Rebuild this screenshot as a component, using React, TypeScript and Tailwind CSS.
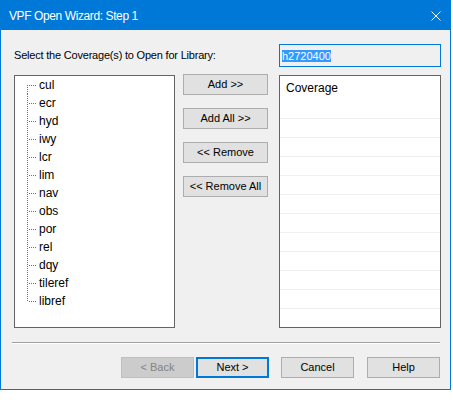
import React from "react";

const items = ["cul", "ecr", "hyd", "iwy", "lcr", "lim", "nav", "obs", "por", "rel", "dqy", "tileref", "libref"];

function TreeRow({ label, first, last }: { label: string; first: boolean; last: boolean }) {
  return (
    <div className="flex items-center h-[18px] pl-[12px]">
      <svg width="12" height="18" className="shrink-0" shapeRendering="crispEdges">
        <line
          x1="0.5"
          y1={first ? 9 : 0}
          x2="0.5"
          y2={last ? 10 : 18}
          stroke="#707070"
          strokeWidth="1"
          strokeDasharray="1 1"
        />
        <line x1="2" y1="9.5" x2="10" y2="9.5" stroke="#707070" strokeWidth="1" strokeDasharray="1 1" />
      </svg>
      <span className="text-[12px] leading-[16px] text-black">{label}</span>
    </div>
  );
}

function Btn({ children }: { children: React.ReactNode }) {
  return (
    <div className="h-[21px] w-[85px] bg-[#e1e1e1] border border-[#adadad] flex items-center justify-center text-[11px] text-black">
      {children}
    </div>
  );
}

function FootBtn({ children, variant }: { children: React.ReactNode; variant?: "disabled" | "default" }) {
  const base = "h-[21px] w-[73px] flex items-center justify-center text-[11px]";
  if (variant === "disabled")
    return <div className={`${base} bg-[#cccccc] border border-[#bfbfbf] text-[#838383]`}>{children}</div>;
  if (variant === "default")
    return <div className={`${base} bg-[#e1e1e1] border-2 border-[#0078d7] text-black`}>{children}</div>;
  return <div className={`${base} bg-[#e1e1e1] border border-[#adadad] text-black`}>{children}</div>;
}

export default function App() {
  return (
    <div className="w-[453px] h-[403px] bg-white" style={{ fontFamily: '"Liberation Sans", Arial, sans-serif' }}>
      <div className="w-[451px] h-[390px] border border-[#0078d7] flex flex-col bg-[#f0f0f0]">
        <div className="h-[29px] bg-[#0078d7] flex items-center justify-between shrink-0">
          <span className="pl-[8px] text-white text-[12px] tracking-[-0.4px]">VPF Open Wizard: Step 1</span>
          <svg width="10" height="10" viewBox="0 0 10 10" className="mr-[9px]">
            <path d="M0.5 0.5 L9.5 9.5 M9.5 0.5 L0.5 9.5" stroke="white" strokeWidth="1" fill="none" />
          </svg>
        </div>
        <div className="flex-1 flex flex-col pl-[13px] pr-[9px] pt-[14px]">
          <div className="flex items-center justify-between h-[23px]">
            <span className="text-[11px] tracking-[-0.2px] text-black">Select the Coverage(s) to Open for Library:</span>
            <div className="w-[162px] h-[23px] border border-[#0078d7] bg-[#f0f0f0] flex items-center pl-[2px]">
              <span className="bg-[#3399ff] text-white text-[11px] leading-[12px]">h2720400</span>
            </div>
          </div>
          <div className="flex mt-[8px] h-[253px]">
            <div className="w-[161px] h-full border border-[#646464] bg-white">
              {items.map((it, i) => (
                <TreeRow key={it} label={it} first={i === 0} last={i === items.length - 1} />
              ))}
            </div>
            <div className="ml-[8px] -mt-[1px] flex flex-col gap-[13px]">
              <Btn>Add &gt;&gt;</Btn>
              <Btn>Add All &gt;&gt;</Btn>
              <Btn>&lt;&lt; Remove</Btn>
              <Btn>&lt;&lt; Remove All</Btn>
            </div>
            <div className="ml-auto w-[162px] h-full border border-[#646464] bg-white flex flex-col">
              <div className="h-[42px] pl-[6px] pt-[4px] text-[12px] leading-[16px] text-black">Coverage</div>
              {Array.from({ length: 11 }).map((_, i) => (
                <div key={i} className="h-[19px] border-t border-[#f0f0f0]" />
              ))}
            </div>
          </div>
          <div className="mt-[14px] -ml-[2px] mr-[1px] h-[2px] border-t border-[#a0a0a0] border-b border-b-white" />
          <div className="mt-[13px] mr-[1px] flex justify-end">
            <FootBtn variant="disabled">&lt; Back</FootBtn>
            <div className="ml-[2px]">
              <FootBtn variant="default">Next &gt;</FootBtn>
            </div>
            <div className="ml-[12px]">
              <FootBtn>Cancel</FootBtn>
            </div>
            <div className="ml-[13px]">
              <FootBtn>Help</FootBtn>
            </div>
          </div>
        </div>
      </div>
    </div>
  );
}
